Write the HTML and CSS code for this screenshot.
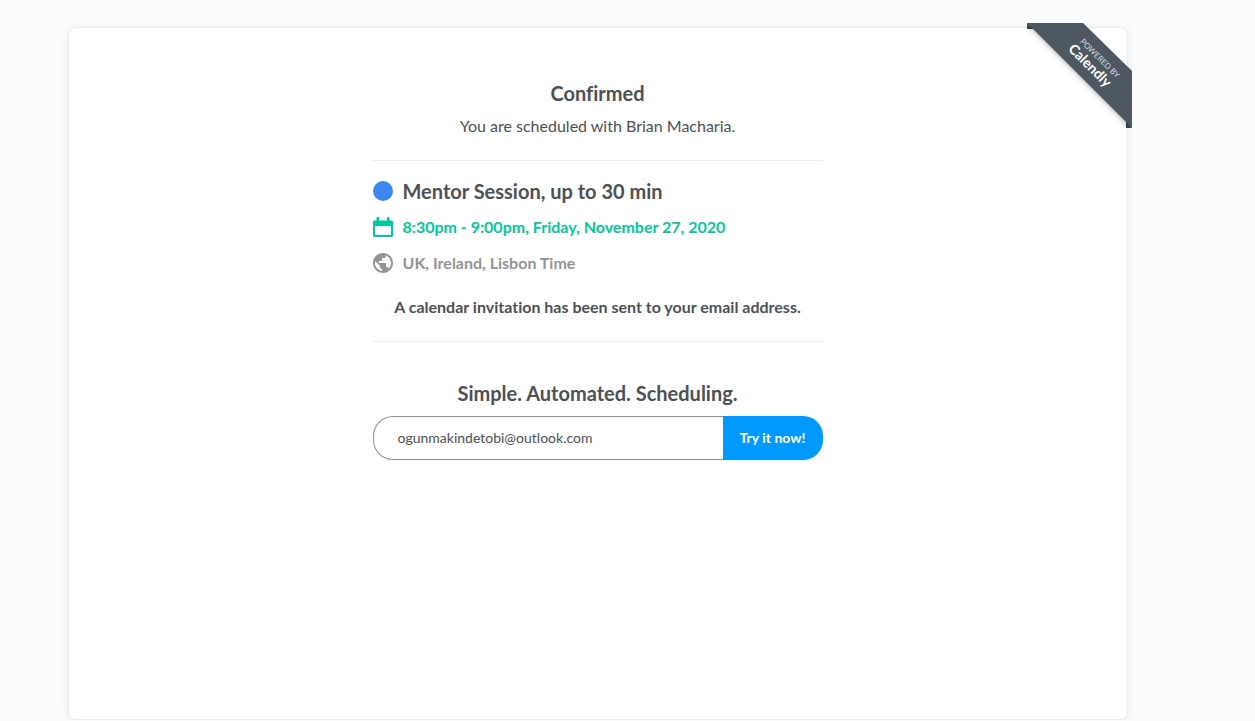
FILE: index.html
```html
<!DOCTYPE html>
<html lang="en">
<head>
<meta charset="utf-8">
<meta name="viewport" content="width=device-width, initial-scale=1">
<title>Confirmed - Calendly</title>
<link rel="stylesheet" href="styles.css">
</head>
<body>
<main class="card">
  <a class="ribbon" href="#" aria-label="Powered by Calendly">
    <svg class="ribbon-art" viewBox="0 0 105 105" width="105" height="105">
      <path class="ribbon-fold" d="M0 0v6h7zM105 105h-6v-7z"/>
      <path class="ribbon-band" d="M0 0h56l49 48v57z"/>
      <g transform="rotate(45 66 38)" text-anchor="middle">
        <text class="ribbon-small" x="69" y="34">POWERED BY</text>
        <text class="ribbon-name" x="67" y="48">Calendly</text>
      </g>
    </svg>
  </a>
  <div class="content">
    <header class="intro">
      <h1 class="heading">Confirmed</h1>
      <p class="subtitle">You are scheduled with Brian Macharia.</p>
    </header>
    <section class="event">
      <h2 class="row event-name"><span class="dot"></span>Mentor Session, up to 30 min</h2>
      <p class="row event-time">
        <svg class="icon" viewBox="0 0 20 20" aria-hidden="true"><path fill-rule="evenodd" d="M3.500 1a1.300 1.300 0 0 1 2.600 0V3.500h7.800V1a1.300 1.300 0 0 1 2.600 0V3.500h2a1.500 1.500 0 0 1 1.500 1.500v13.500a1.500 1.500 0 0 1-1.500 1.500h-17a1.500 1.500 0 0 1-1.500-1.500V5a1.500 1.500 0 0 1 1.500-1.500h2zM2 9v9h16V9z"/></svg>
        8:30pm - 9:00pm, Friday, November 27, 2020
      </p>
      <p class="row event-zone">
        <svg class="icon" viewBox="2 2 20 20" aria-hidden="true"><path d="M12 2C6.480 2 2 6.480 2 12s4.480 10 10 10 10-4.480 10-10S17.520 2 12 2zm-1 17.930c-3.950-.490-7-3.850-7-7.930 0-.620.080-1.210.210-1.790L9 15v1c0 1.100.900 2 2 2v1.930zm6.900-2.540c-.260-.810-1-1.390-1.900-1.390h-1v-3c0-.550-.450-1-1-1H8v-2h2c.550 0 1-.450 1-1V7h2c1.100 0 2-.900 2-2v-.410c2.930 1.190 5 4.060 5 7.410 0 2.080-.800 3.970-2.100 5.390z"/></svg>
        UK, Ireland, Lisbon Time
      </p>
      <p class="notice">A calendar invitation has been sent to your email address.</p>
    </section>
    <form class="signup">
      <h2 class="heading"><label for="email">Simple. Automated. Scheduling.</label></h2>
      <div class="field">
        <input class="email" id="email" type="email" value="ogunmakindetobi@outlook.com">
        <button class="submit" type="button">Try it now!</button>
      </div>
    </form>
  </div>
</main>
</body>
</html>
```
FILE: styles.css
```css
* {
  box-sizing: border-box;
}

body {
  margin: 0;
  padding: 27px 60px 0 0;
  background: #fbfcfe;
  color: #4d5055;
  font-family: Lato, "Open Sans", sans-serif;
  font-size: 16px;
  font-variant-ligatures: none;
  line-height: 24px;
}

h1, h2, p {
  margin: 0;
}

.card {
  position: relative;
  max-width: 1060px;
  min-height: calc(100vh - 28px);
  margin: 0 auto;
  padding: 53px 24px;
  border: 1px solid #ececec;
  border-radius: 8px;
  background: #fff;
  box-shadow: 0 1px 8px rgba(0, 0, 0, 0.08);
}

.content {
  max-width: 450px;
  margin: 0 auto;
}

.heading {
  font-size: 20px;
  line-height: 24px;
  font-weight: 700;
  text-align: center;
}

.intro {
  padding-bottom: 22px;
  border-bottom: 1px solid #ececec;
  text-align: center;
}

.subtitle {
  margin-top: 9px;
}

.event {
  padding: 18px 0 22px;
  border-bottom: 1px solid #ececec;
  font-weight: 700;
}

.row {
  display: flex;
  align-items: center;
  gap: 10px;
  margin-bottom: 12px;
}

.event-name {
  font-size: 20px;
  line-height: 24px;
}

.dot,
.icon {
  flex: none;
  width: 20px;
  height: 20px;
  fill: currentColor;
}

.icon {
  overflow: visible;
}

.dot {
  border-radius: 50%;
  background: #3d87f0;
}

.event-time {
  color: #00c99c;
}

.event-zone {
  color: #939498;
}

.notice {
  margin-top: 20px;
  text-align: center;
}

.signup {
  padding-top: 39px;
}

.field {
  display: flex;
  height: 44px;
  margin-top: 11px;
}

.email {
  flex: 1;
  min-width: 0;
  padding: 0 24px;
  border: 1px solid #8f9094;
  border-right: 0;
  border-radius: 20px 0 0 20px;
  background: #fff;
  color: #4d5055;
  font: inherit;
  font-size: 14px;
}

.submit {
  width: 100px;
  padding: 0;
  border: 0;
  border-radius: 0 20px 20px 0;
  background: #0099ff;
  color: #fff;
  font: inherit;
  font-size: 14px;
  font-weight: 700;
}

.ribbon {
  position: absolute;
  top: -5px;
  right: -5px;
}

.ribbon-art {
  display: block;
}

.ribbon-fold {
  fill: #3f484f;
}

.ribbon-band {
  fill: #4d5860;
  filter: drop-shadow(-1px 2px 2px rgba(0, 0, 0, 0.2));
}

.ribbon-small {
  fill: #dcdee0;
  font-size: 8px;
}

.ribbon-name {
  fill: #fff;
  font-size: 14px;
  font-weight: 700;
}
```
